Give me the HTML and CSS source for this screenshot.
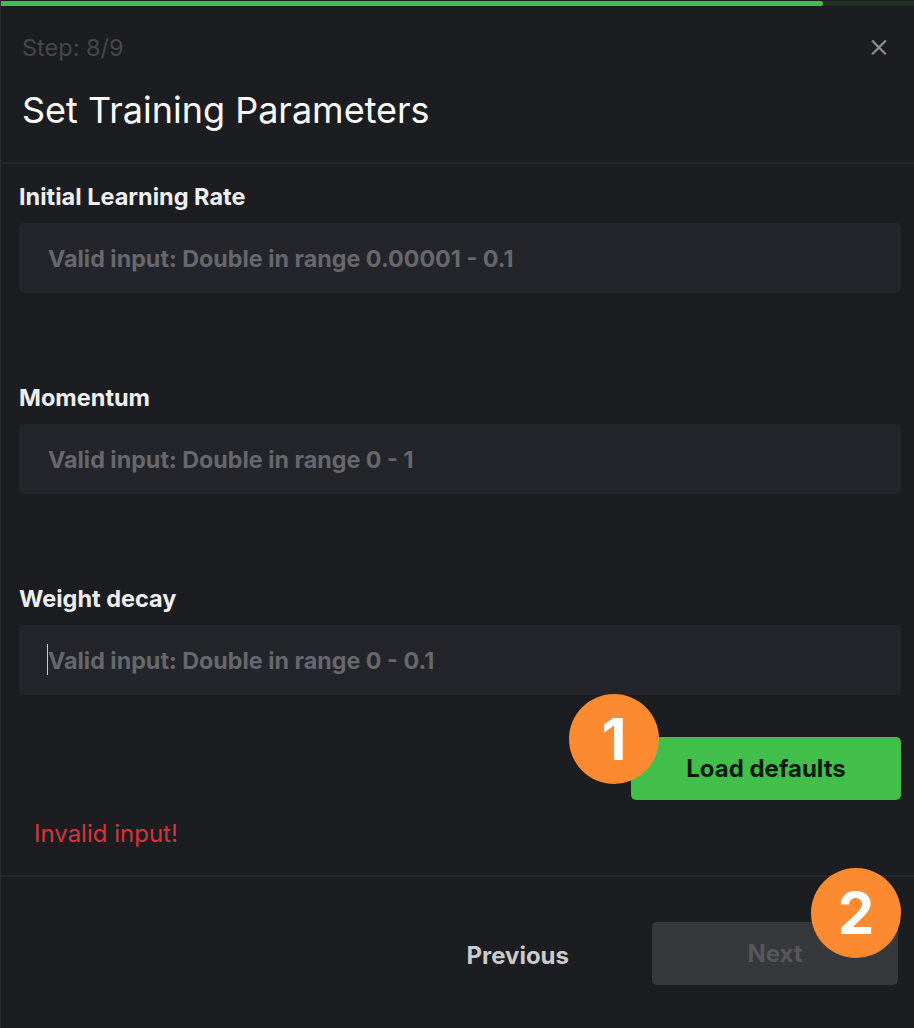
FILE: index.html
```html
<!DOCTYPE html>
<html>
<head>
<meta charset="utf-8">
<link rel="stylesheet" href="styles.css">
</head>
<body>
<div class="dialog">
  <div class="progress"><div class="progress-fill" style="width: 90%"></div></div>
  <header class="header">
    <div class="step-row">
      <span class="step">Step: 8/9</span>
      <span class="close">×</span>
    </div>
    <h1 class="title">Set Training Parameters</h1>
  </header>
  <main class="body">
    <div class="field">
      <label class="label">Initial Learning Rate</label>
      <div class="input"><span class="placeholder">Valid input: Double in range 0.00001 - 0.1</span></div>
    </div>
    <div class="field">
      <label class="label">Momentum</label>
      <div class="input"><span class="placeholder">Valid input: Double in range 0 - 1</span></div>
    </div>
    <div class="field last">
      <label class="label">Weight decay</label>
      <div class="input focused"><span class="caret"></span><span class="placeholder">Valid input: Double in range 0 - 0.1</span></div>
    </div>
    <div class="actions">
      <div class="btn-wrap">
        <button class="btn-green">Load defaults</button>
        <span class="badge badge-1">1</span>
      </div>
    </div>
    <div class="error">Invalid input!</div>
  </main>
  <footer class="footer">
    <button class="btn-prev">Previous</button>
    <div class="btn-wrap">
      <button class="btn-next">Next</button>
      <span class="badge badge-2">2</span>
    </div>
  </footer>
</div>
</body>
</html>
```
FILE: styles.css
```css
* { box-sizing: border-box; }
html, body { margin: 0; padding: 0; }
body {
  background: #1c1d21;
  font-family: Inter, Roboto, "Liberation Sans", sans-serif;
  color: #fff;
  width: 914px;
  height: 1028px;
  overflow: hidden;
}
.dialog {
  display: flex;
  flex-direction: column;
  height: 1028px;
  border-left: 1px solid #2a2b30;
}
.progress {
  height: 6px;
  padding-top: 1px;
  background: linear-gradient(#1c1d21 1px, #1f3323 1px);
}
.progress-fill {
  height: 5px;
  background: #42be4a;
  border-radius: 0 3px 3px 0;
}
.header {
  padding: 0 24px 0 21px;
  border-bottom: 2px solid #26272c;
  height: 158px;
}
.step-row {
  display: flex;
  justify-content: space-between;
  align-items: center;
  height: 28px;
  margin-top: 27px;
}
.step {
  font-size: 23.5px;
  color: #46474c;
}
.close {
  font-size: 34px;
  font-weight: 300;
  color: #8c8d91;
  line-height: 1;
  margin-right: 0;
  margin-top: -4px;
}
.title {
  margin: 27px 0 0;
  font-size: 36px;
  font-weight: 400;
  color: #fbfbfb;
  line-height: 44px;
}
.body {
  padding: 19px 13px 0 18px;
  height: 713px;
  border-bottom: 2px solid #26272c;
}
.field {
  height: 201px;
}
.field.last { height: 152px; }
.label {
  display: block;
  font-size: 23.5px;
  font-weight: 700;
  color: #eeeff0;
  line-height: 28px;
  margin-bottom: 12px;
}
.input {
  height: 70px;
  background: #23252a;
  border-radius: 5px;
  display: flex;
  align-items: center;
  padding-left: 29px;
  position: relative;
}
.placeholder {
  font-size: 23.3px;
  font-weight: 700;
  color: #66686d;
  margin-top: 1px;
}
.caret {
  position: absolute;
  left: 28px;
  top: 19px;
  width: 1px;
  height: 31px;
  background: #c9cacd;
}
.actions {
  display: flex;
  justify-content: flex-end;
}
.btn-wrap { position: relative; }
.btn-green {
  width: 270px;
  height: 63px;
  border: 0;
  border-radius: 5px;
  background: #42be4a;
  color: #111a12;
  font-family: inherit;
  font-size: 24px;
  font-weight: 700;
}
.badge {
  position: absolute;
  width: 90px;
  height: 90px;
  border-radius: 50%;
  background: #fb8a31;
  color: #fff;
  font-weight: 700;
  font-size: 58px;
  display: flex;
  align-items: center;
  justify-content: center;
  line-height: 1;
}
.badge-1 { left: -62px; top: -43px; }
.badge-2 { left: 159px; top: -54px; }
.error {
  margin-top: 20px;
  margin-left: 15px;
  font-size: 24px;
  color: #d6353b;
  line-height: 28px;
}
.footer {
  display: flex;
  justify-content: flex-end;
  align-items: flex-start;
  padding: 45px 16px 0 0;
  gap: 83px;
}
.btn-prev {
  background: none;
  border: 0;
  padding: 0;
  color: #c9cacd;
  font-family: inherit;
  font-size: 24px;
  font-weight: 700;
  line-height: 28px;
  margin-top: 20px;
}
.btn-next {
  width: 246px;
  height: 63px;
  border: 0;
  border-radius: 5px;
  background: #37383c;
  color: #56575b;
  font-family: inherit;
  font-size: 24px;
  font-weight: 700;
}
```
